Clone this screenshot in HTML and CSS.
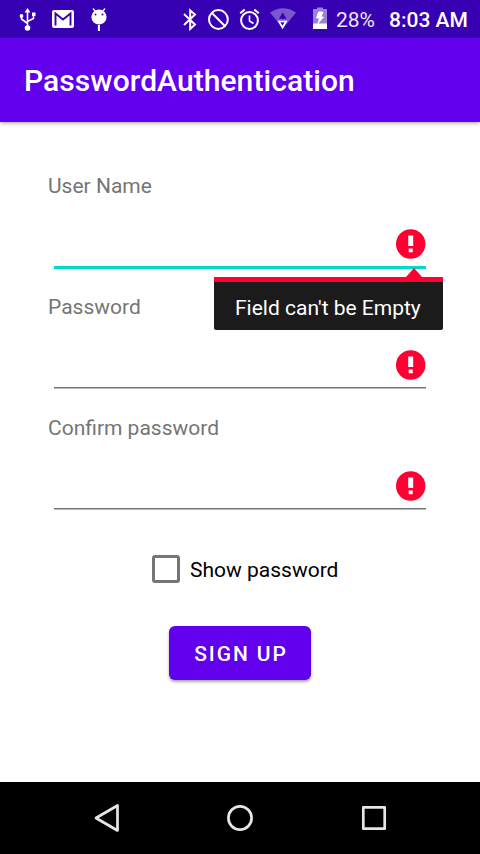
FILE: index.html
```html
<!DOCTYPE html>
<html lang="en">
<head>
<meta charset="utf-8">
<title>PasswordAuthentication</title>
<link rel="stylesheet" href="styles.css">
</head>
<body>
<div class="status">
  <div class="notifications">
    <svg width="20" height="38" viewBox="18 0 20 38" fill="none" stroke="#fff" stroke-width="1.6"><path d="M27.500 11v16M21.500 16.500v2.500l6 4.500M33.500 15v3.500l-6 3"/><path d="M27.500 8l3 4.500h-6zM32 12.500h3.500v3.500H32z" fill="#fff" stroke="none"/><circle cx="27.500" cy="28" r="2.800" fill="#fff" stroke="none"/><circle cx="21.500" cy="16" r="1.900" fill="#fff" stroke="none"/></svg>
    <svg width="24" height="38" viewBox="51 0 24 38"><rect x="52" y="10" width="22" height="18" rx="2" fill="#fff"/><path d="M55.500 25.500V13.500l7.500 6 7.500-6v12" fill="none" stroke="#3700b3" stroke-width="1.900"/></svg>
    <svg width="18" height="38" viewBox="90 0 18 38"><path d="M93 8.500l2.500 3M105 8.500l-2.500 3" stroke="#fff" stroke-width="1.300"/><circle cx="99" cy="17" r="7.600" fill="#fff"/><path d="M98.900 25v6" stroke="#fff" stroke-width="2"/><circle cx="95.500" cy="14.500" r="1" fill="#3700b3"/><circle cx="102.500" cy="14.500" r="1" fill="#3700b3"/></svg>
  </div>
  <div class="system">
    <svg width="16" height="38" viewBox="182 0 16 38" fill="none" stroke="#fff" stroke-width="2"><path d="M184 14l11 10.500-4.800 4.500V10.500l4.800 4L184 25"/></svg>
    <svg width="24" height="38" viewBox="206 0 24 38" fill="none" stroke="#fff" stroke-width="2"><circle cx="218.400" cy="19.500" r="9.400"/><path d="M211.700 12.800l13.400 13.400"/></svg>
    <svg width="24" height="38" viewBox="238 0 24 38" fill="none" stroke="#fff" stroke-width="2"><circle cx="249.500" cy="20.500" r="8.400"/><path d="M249.500 15.500v5.500l4 2.500" stroke-width="1.600"/><path d="M240.200 13.200l4.500-3.700M258.800 13.200l-4.500-3.700"/></svg>
    <svg width="28" height="38" viewBox="269 0 28 38"><path d="M270 12.500q13-8.500 26 0L283 28.500z" fill="#fff" opacity=".34"/><path d="M279 18.800h7.500l-3.800-6.300z" fill="#3700b3"/><path d="M279 21.500h7l-3.500 6z" fill="#3700b3" stroke="#fff" stroke-width="1.700"/></svg>
    <svg width="16" height="38" viewBox="312 0 16 38"><path d="M317 7.500h6V9h4v15h-14V9h4z" fill="#fff" opacity=".5"/><path d="M313 23.500h14V29h-14z" fill="#fff"/><path d="M318.500 12l-2 6h3l-1.500 5.500 5.500-6.500H321l2-5z" fill="#fff" stroke="#fff" stroke-width=".8"/></svg>
    <span class="percent">28%</span>
    <span class="clock">8:03 AM</span>
  </div>
</div>
<header class="appbar"><h1>PasswordAuthentication</h1></header>
<main>
  <div class="field focused">
    <label>User Name</label>
    <div class="input"><svg width="30" height="30" viewBox="0 0 30 30"><circle cx="14.700" cy="15" r="14.700" fill="#ff0033"/><path d="M12.200 6.500h5V17h-5zM12.700 19.500h4v3.800h-4z" fill="#fff"/></svg></div>
    <div class="error"><svg class="arrow" width="16" height="10" viewBox="0 0 16 10"><path d="M0 10l8-9 8 9z" fill="#ff0033"/></svg>Field can't be Empty</div>
  </div>
  <div class="field">
    <label>Password</label>
    <div class="input"><svg width="30" height="30" viewBox="0 0 30 30"><circle cx="14.700" cy="15" r="14.700" fill="#ff0033"/><path d="M12.200 6.500h5V17h-5zM12.700 19.500h4v3.800h-4z" fill="#fff"/></svg></div>
  </div>
  <div class="field">
    <label>Confirm password</label>
    <div class="input"><svg width="30" height="30" viewBox="0 0 30 30"><circle cx="14.700" cy="15" r="14.700" fill="#ff0033"/><path d="M12.200 6.500h5V17h-5zM12.700 19.500h4v3.800h-4z" fill="#fff"/></svg></div>
  </div>
  <div class="check"><span class="box"></span><span class="caption">Show password</span></div>
  <button class="signup">SIGN UP</button>
</main>
<nav class="navbar">
  <svg width="28" height="30" viewBox="93 803 28 30"><path d="M96 818l21.500-12.500v25z"/></svg>
  <svg width="28" height="30" viewBox="226 803 28 30"><circle cx="240" cy="818" r="11.600"/></svg>
  <svg width="28" height="30" viewBox="360 803 28 30"><rect x="363.300" y="807.300" width="21.400" height="21.400"/></svg>
</nav>
</body>
</html>
```

FILE: styles.css
```css
* { box-sizing: border-box; }
body { margin: 0; width: 480px; height: 854px; display: flex; flex-direction: column; background: #fff; font-family: Roboto, sans-serif; font-size: 21px; line-height: 28px; overflow: hidden; }
svg { display: block; flex: none; }
.status { height: 38px; flex: none; background: #3700b3; color: #fff; display: flex; justify-content: space-between; padding: 0 12px 0 18px; }
.notifications { display: flex; gap: 13px; }
.notifications svg:last-child { margin-left: 2px; }
.system { display: flex; line-height: 41px; white-space: nowrap; }
.system svg:nth-child(1) { margin-right: 8px; }
.system svg:nth-child(2) { margin-right: 8px; }
.system svg:nth-child(3) { margin-right: 7px; }
.system svg:nth-child(4) { margin-right: 15px; }
.system svg:nth-child(5) { margin-right: 8px; }
.percent { width: 53px; color: #ebe5f7; }
.clock { width: 79px; font-weight: 500; }
.appbar { height: 84px; flex: none; background: #6200ee; color: #fff; padding: 2px 24px 0; display: flex; align-items: center; box-shadow: 0 1px 4px rgba(0,0,0,.4); }
.appbar h1 { margin: 0; font-size: 30px; line-height: 40px; font-weight: 500; letter-spacing: .07px; }
main { flex: 1; padding: 50px 48px 0; display: flex; flex-direction: column; }
.field { position: relative; height: 121px; color: #757575; }
.field label { display: block; height: 28px; }
.input { height: 67px; margin: 0 6px; padding-top: 29px; display: flex; justify-content: flex-end; align-items: flex-start; border-bottom: 1px solid #757575; box-shadow: 0 1px #bababa; }
.focused .input { height: 69px; border-bottom: 3px solid #03dac5; box-shadow: none; }
.focused { z-index: 1; }
.error { position: absolute; left: 166px; top: 105px; width: 229px; height: 53px; padding: 12px 0 0 21px; line-height: 29px; background: #1b1b1b; border-top: 5px solid #ff0033; border-radius: 0 0 2px 2px; color: #fff; white-space: nowrap; }
.arrow { position: absolute; top: -15px; right: 21px; }
.check { margin: 20px 0 0 104px; height: 28px; display: flex; align-items: center; color: #000; }
.caption { padding-top: 2px; }
.box { width: 28px; height: 28px; margin-right: 10px; border: 3px solid #757575; border-radius: 3px; }
.signup { width: 142px; height: 54px; margin: 43px 0 0 121px; padding: 2px 0 0 2px; border: 0; border-radius: 6px; background: #6200ee; color: #fff; font: 500 21px/28px Roboto, sans-serif; letter-spacing: 1.900px; box-shadow: 0 2px 3px rgba(0,0,0,.35); }
.navbar { height: 72px; flex: none; background: #000; display: flex; justify-content: space-between; align-items: center; padding: 0 92px 0 93px; }
.navbar svg { fill: none; stroke: #e6e6e6; stroke-width: 2.700; stroke-linejoin: round; }
.navbar svg:nth-child(2) { margin-left: -1px; }
```
